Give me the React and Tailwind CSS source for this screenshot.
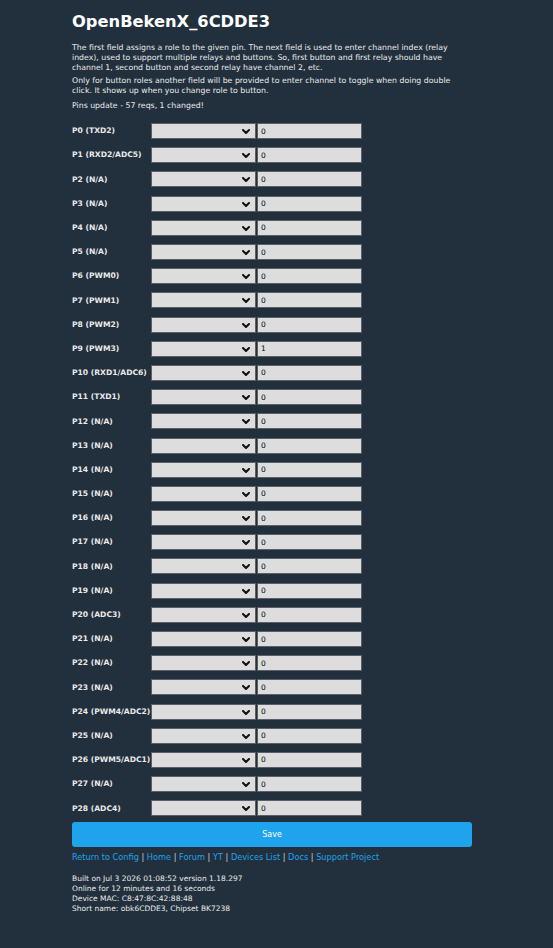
import React from 'react';

const pins = [
  'P0 (TXD2)', 'P1 (RXD2/ADC5)', 'P2 (N/A)', 'P3 (N/A)', 'P4 (N/A)', 'P5 (N/A)',
  'P6 (PWM0)', 'P7 (PWM1)', 'P8 (PWM2)', 'P9 (PWM3)', 'P10 (RXD1/ADC6)', 'P11 (TXD1)',
  'P12 (N/A)', 'P13 (N/A)', 'P14 (N/A)', 'P15 (N/A)', 'P16 (N/A)', 'P17 (N/A)',
  'P18 (N/A)', 'P19 (N/A)', 'P20 (ADC3)', 'P21 (N/A)', 'P22 (N/A)', 'P23 (N/A)',
  'P24 (PWM4/ADC2)', 'P25 (N/A)', 'P26 (PWM5/ADC1)', 'P27 (N/A)', 'P28 (ADC4)',
];

const links = ['Return to Config', 'Home', 'Forum', 'YT', 'Devices List', 'Docs', 'Support Project'];

const PinRow = ({ label, channel }) => (
  <div className="flex items-center h-[24.2px]">
    <div className="w-[79px] font-bold text-[7.6px] leading-none whitespace-nowrap">{label}</div>
    <div className="relative w-[105px] h-4">
      <select className="block appearance-none w-full h-full bg-[#dddddd] border border-[#5b6067] text-black text-[7px] outline-none" />
      <svg className="absolute right-[6px] top-[6px] w-[8px] h-[5px]" viewBox="0 0 8 5">
        <polyline points="1,1 4,4 7,1" fill="none" stroke="#111" strokeWidth="2" strokeLinecap="round" strokeLinejoin="round" />
      </svg>
    </div>
    <input
      readOnly
      value={channel}
      className="block ml-px w-[105px] h-4 bg-[#dddddd] border border-[#5b6067] text-black text-[7.5px] pl-[3px] outline-none"
    />
  </div>
);

const App = () => {
  return (
    <div className="min-h-[948px] bg-[#22303d] text-[#eaeaea] font-['DejaVu_Sans',Verdana,sans-serif]">
      <div className="ml-[72px] w-[400px] pt-[12px]">
        <h1 className="text-[16.3px] font-bold leading-[20px] text-white">OpenBekenX_6CDDE3</h1>

        <div className="mt-[11px] text-[7.8px] leading-[10px]">
          <p>
            The first field assigns a role to the given pin. The next field is used to enter channel index (relay
            index), used to support multiple relays and buttons. So, first button and first relay should have
            channel 1, second button and second relay have channel 2, etc.
          </p>
          <p className="mt-[3px]">
            Only for button roles another field will be provided to enter channel to toggle when doing double
            click. It shows up when you change role to button.
          </p>
          <p className="mt-[5px]">Pins update - 57 reqs, 1 changed!</p>
        </div>

        {/* pin role / channel table */}
        <div className="mt-[8px]">
          {pins.map((label, i) => (
            <PinRow key={label} label={label} channel={i === 9 ? '1' : '0'} />
          ))}
        </div>

        <button className="block mt-[2px] w-full h-[25px] rounded-[3px] bg-[#1fa3ec] text-white text-[8px]">Save</button>

        <div className="mt-[5px] text-[8.2px] leading-[10px] whitespace-nowrap">
          {links.map((l, i) => (
            <span key={l}>
              {i > 0 && <span className="text-[#cfd6dd]"> | </span>}
              <a className="text-[#1fa3ec]">{l}</a>
            </span>
          ))}
        </div>

        <div className="mt-[12px] text-[7.5px] leading-[10px]">
          <div>Built on Jul 3 2026 01:08:52 version 1.18.297</div>
          <div>Online for 12 minutes and 16 seconds</div>
          <div>Device MAC: C8:47:8C:42:88:48</div>
          <div>Short name: obk6CDDE3, Chipset BK7238</div>
        </div>
      </div>
    </div>
  );
};

export default App;
